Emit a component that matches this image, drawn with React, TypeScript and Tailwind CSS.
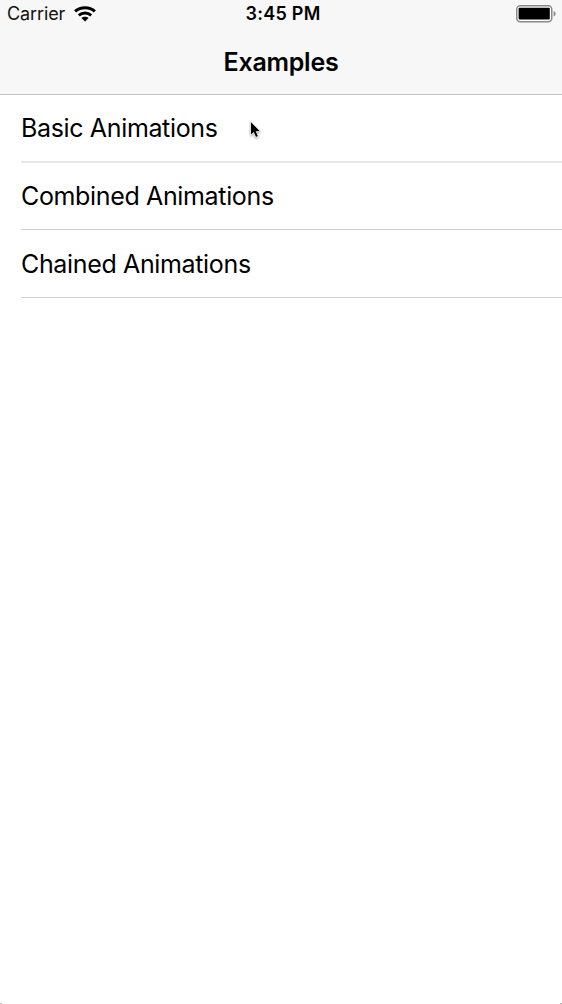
const examples = [
  { title: 'Basic Animations', divider: 'h-[68px] border-b-2 border-[#e6e6e6]' },
  { title: 'Combined Animations', divider: 'h-[67px] border-b border-[#d2d2d2]' },
  { title: 'Chained Animations', divider: 'h-[68px] border-b border-[#d2d2d2]' },
];

function WifiIcon() {
  return (
    <svg width="22" height="16" viewBox="0 0 22 16" fill="none" stroke="#000" strokeWidth="3.1">
      <path d="M1.1 5.4C6.7 0.5 15.3 0.5 20.9 5.4" />
      <path d="M4.8 9.4C8.4 6.2 13.6 6.2 17.2 9.4" strokeWidth="2.8" />
      <path d="M11 15.5L7.4 12C9.4 10.2 12.6 10.2 14.6 12Z" fill="#000" stroke="none" />
    </svg>
  );
}

function BatteryIcon() {
  return (
    <svg width="41" height="18" viewBox="0 0 41 18">
      <rect x="0.75" y="0.75" width="35" height="16" rx="3.5" fill="#fff" stroke="#8a8a8a" strokeWidth="1.5" />
      <rect x="2.6" y="2.8" width="31.2" height="11.8" rx="1" fill="#000" />
      <path d="M37.6 6C40.2 6.8 40.2 10.7 37.6 11.5Z" fill="#858585" />
    </svg>
  );
}

function Cursor() {
  return (
    <svg className="absolute left-[249px] top-[120px]" width="14" height="20" viewBox="0 0 14 20">
      <path
        d="M1.5 1.2V15.4L4.6 12.6L6.8 17.4L9.4 16.3L7.3 11.6H11.6Z"
        fill="#000"
        stroke="#fff"
        strokeWidth="0.8"
        className="drop-shadow-[0_1px_1px_rgba(0,0,0,0.35)]"
      />
    </svg>
  );
}

export default function App() {
  return (
    <div className="relative h-[1004px] w-[562px] overflow-hidden bg-white font-['Inter','Liberation_Sans',sans-serif] text-black">
      <header className="flex h-[95px] flex-col border-b border-[#c4c4c4] bg-[#f7f7f7]">
        <div className="grid h-7 grid-cols-3 items-center pl-[7px] pr-[5px]">
          <div className="flex items-center gap-[9px]">
            <span className="text-[18px] leading-7 tracking-[-0.1px] text-[#111]">Carrier</span>
            <WifiIcon />
          </div>
          <span className="pl-[2px] text-center text-[18px] font-semibold leading-7 tracking-[0.25px]">3:45 PM</span>
          <div className="flex justify-end">
            <BatteryIcon />
          </div>
        </div>
        <h1 className="text-center text-[25px] font-semibold leading-[68px] tracking-[-0.25px]">Examples</h1>
      </header>
      <ul>
        {examples.map(({ title, divider }) => (
          <li key={title} className="pl-[21px]">
            <div className={`flex items-center ${divider}`}>
              <span className="text-[25px] leading-[66px] tracking-[-0.35px]">{title}</span>
            </div>
          </li>
        ))}
      </ul>
      <Cursor />
      <span className="absolute bottom-0 left-0 h-px w-[2px] bg-[#b5b5b5]" />
      <span className="absolute bottom-0 right-0 h-px w-[2px] bg-[#b5b5b5]" />
    </div>
  );
}
